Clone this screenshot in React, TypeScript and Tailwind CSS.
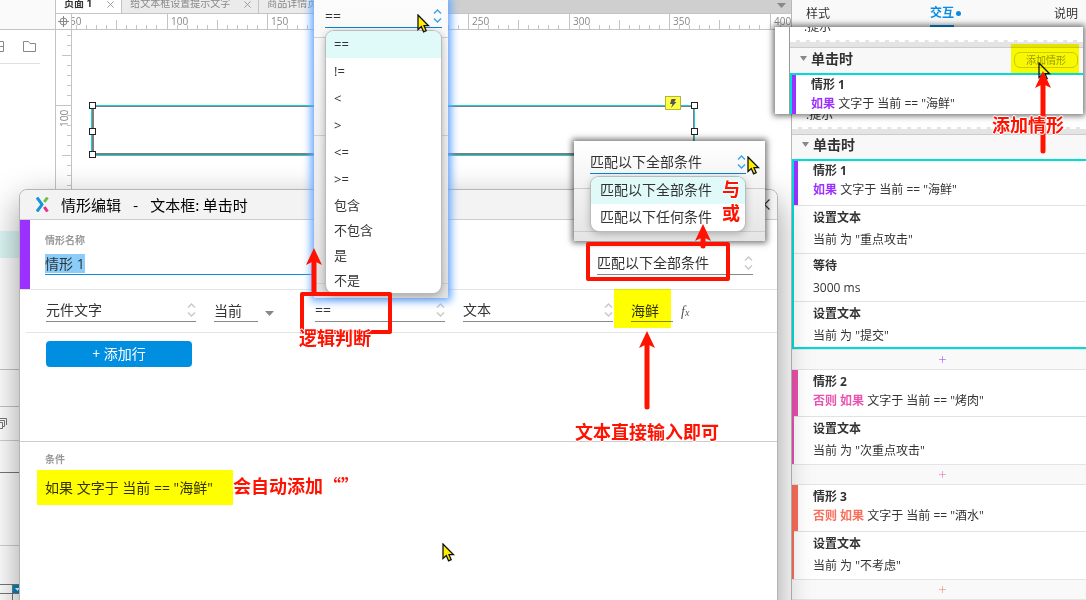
import React from 'react';

const operators = ['==', '!=', '<', '>', '<=', '>='];
const textOperators = ['包含', '不包含', '是', '不是'];

interface ActionData {
  title: string;
  detail: string;
}

interface CaseData {
  name: string;
  prefix: string;
  condition: string;
  bar: string;
  line: string;
  text: string;
  selected?: boolean;
  actions: ActionData[];
}

const cases: CaseData[] = [
  {
    name: '情形 1',
    prefix: '如果',
    condition: '文字于 当前 == "海鲜"',
    bar: 'bg-[#9b30ff]',
    line: 'border-[#9b30ff]',
    text: 'text-[#9b30ff]',
    selected: true,
    actions: [
      { title: '设置文本', detail: '当前 为 "重点攻击"' },
      { title: '等待', detail: '3000 ms' },
      { title: '设置文本', detail: '当前 为 "提交"' },
    ],
  },
  {
    name: '情形 2',
    prefix: '否则 如果',
    condition: '文字于 当前 == "烤肉"',
    bar: 'bg-[#e650ac]',
    line: 'border-[#e650ac]',
    text: 'text-[#e854b0]',
    actions: [{ title: '设置文本', detail: '当前 为 "次重点攻击"' }],
  },
  {
    name: '情形 3',
    prefix: '否则 如果',
    condition: '文字于 当前 == "酒水"',
    bar: 'bg-[#fa6c5a]',
    line: 'border-[#fa6c5a]',
    text: 'text-[#fa6f5c]',
    actions: [{ title: '设置文本', detail: '当前 为 "不考虑"' }],
  },
];

const Chevrons = ({ className = 'text-[#c8c8c8]' }: { className?: string }) => (
  <svg width="9" height="14" viewBox="0 0 9 14" fill="none" stroke="currentColor" strokeWidth="1.4" className={`shrink-0 ${className}`}>
    <path d="M1 4.5L4.5 1L8 4.5M1 9.5L4.5 13L8 9.5" />
  </svg>
);

const Triangle = ({ className = '' }: { className?: string }) => (
  <svg width="9" height="5" viewBox="0 0 9 5" className={`shrink-0 ${className}`}>
    <path d="M0 0H9L4.5 5Z" fill="#888" />
  </svg>
);

interface SelectProps {
  label: string;
  options: string[];
  width: string;
  active?: boolean;
}

const Select: React.FC<SelectProps> = ({ label, options, width, active }) => (
  <div className={`flex h-6 items-center border-b ${active ? 'border-[#0a84d0]' : 'border-[#888]'} ${width}`}>
    <select aria-label={label} className="min-w-0 flex-1 appearance-none bg-transparent text-sm leading-5 outline-none">
      {options.map((o) => (
        <option key={o}>{o}</option>
      ))}
    </select>
    <Chevrons className={active ? 'text-[#35a3ea]' : 'text-[#c8c8c8]'} />
  </div>
);

const Cursor = ({ className, fill = '#ffee00' }: { className: string; fill?: string }) => (
  <svg width="13" height="19" viewBox="0 0 13 19" className={`absolute ${className}`}>
    <path d="M1 1V15.5L4.3 12.5L6.6 17.8L9.2 16.7L7 11.7H11.6Z" fill={fill} stroke="#111" strokeWidth="1.3" />
  </svg>
);

const Arrow = ({ className, length }: { className: string; length: number }) => (
  <svg width="16" height={length} className={`absolute ${className}`}>
    <path d={`M8 12V${length - 3}`} stroke="#ff1200" strokeWidth="5" strokeLinecap="round" />
    <path d="M8 0L16 17L8 13L0 17Z" fill="#ff1200" />
  </svg>
);

const Note = ({ className, children }: { className: string; children: React.ReactNode }) => (
  <p
    className={`absolute whitespace-nowrap font-['Noto_Sans_CJK_SC',sans-serif] text-lg leading-5 font-bold text-[#ff1200] [text-shadow:-1px_0_#fff,1px_0_#fff,0_-1px_#fff,0_1px_#fff,0_0_2px_#fff] ${className}`}
  >
    {children}
  </p>
);

const CloseX = ({ size = 7, stroke = '#888' }: { size?: number; stroke?: string }) => (
  <svg width={size} height={size} viewBox="0 0 10 10" stroke={stroke} strokeWidth="1.1" className="shrink-0">
    <path d="M0.5 0.5L9.5 9.5M9.5 0.5L0.5 9.5" />
  </svg>
);

const HorizontalRuler = () => {
  const ticks = Array.from({ length: 72 }, (_, i) => i);
  return (
    <svg className="h-full min-w-0 flex-1" aria-hidden="true">
      {ticks.map((i) => {
        const x = Math.round(i * 10.05 - 6);
        const y = i % 10 === 0 ? 0 : i % 5 === 0 ? 6 : 11;
        return <path key={i} d={`M${x + 0.5} ${y}V16`} stroke="#c4c4c4" />;
      })}
      {[50, 100, 150, 200, 250, 300, 350, 400].map((n, i) => (
        <text key={n} x={Math.round(i * 100.5 - 2)} y="11" fontSize="10" fill="#888">
          {n}
        </text>
      ))}
    </svg>
  );
};

const VerticalRuler = () => (
  <svg className="h-full w-4 shrink-0" aria-hidden="true">
    {Array.from({ length: 57 }, (_, i) => i).map((i) => {
      const x = i % 10 === 7 ? 0 : i % 5 === 2 ? 6 : 11;
      return <path key={i} d={`M${x} ${i * 10 + 5.5}H16`} stroke="#c4c4c4" />;
    })}
    <text transform="translate(12 97) rotate(-90)" fontSize="10" fill="#888">
      100
    </text>
  </svg>
);

const LeftPanel = () => (
  <aside className="flex w-14 shrink-0 flex-col border-r border-[#c4c4c4] bg-white">
    <div className="h-[30px] shrink-0 border-b border-[#c4c4c4] bg-[#fafafa]" />
    <div className="mr-[15px] flex h-[34px] shrink-0 items-center gap-[18px] border-b border-[#e0e0e0]">
      <svg width="5" height="12" fill="none" stroke="#888">
        <path d="M0 0.5H3.5V10.5H0M0 5.5H3" />
      </svg>
      <svg width="14" height="12" fill="none" stroke="#888">
        <path d="M0.5 10.5V0.5H5.5L7 2.5H12.5V10.5Z" />
      </svg>
    </div>
    <div className="h-[167px] shrink-0" />
    <div className="h-[27px] shrink-0 bg-[#dcf8f6]" />
    <div className="h-[112px] shrink-0 border-b border-[#c4c4c4]" />
    <div className="h-[37px] shrink-0 border-b border-[#c4c4c4]" />
    <div className="flex h-[34px] shrink-0 items-center border-b border-[#d0d0d0]">
      <svg width="8" height="12" fill="none" stroke="#777">
        <path d="M0 0.5H6.5V7M0 2.5H4.5V8.5H3M0 4.5H2.5V10.5H0" />
      </svg>
    </div>
    <div className="h-8 shrink-0 border-b border-[#777]" />
    <div className="h-[73px] shrink-0 border-b border-[#d0d0d0]" />
    <div className="h-[39px] shrink-0 border-b border-[#777]" />
    <div className="flex flex-1">
      <div className="w-[13px] border-r border-[#777]">
        <div className="h-[9px] border-b border-[#777]" />
      </div>
      <div className="flex h-[9px] flex-1 items-center border-b border-[#777] bg-[#0089c5] pl-[2px]">
        <svg width="5" height="3">
          <path d="M0 0H5L2.5 3Z" fill="#fff" />
        </svg>
      </div>
    </div>
  </aside>
);

const Handle = ({ className }: { className: string }) => (
  <span className={`absolute size-[7px] border border-[#222] bg-white ${className}`} />
);

const Workspace = () => (
  <main className="flex min-w-0 flex-1 flex-col">
    <nav className="flex h-[14px] shrink-0 overflow-hidden border-b border-[#c4c4c4] bg-[#cfcfcf] text-[10px] leading-[10px] text-[#888]">
      <div className="flex shrink-0 items-end gap-[15px] border-r border-[#c4c4c4] bg-white pr-[7px] pb-[5px] pl-2 font-bold whitespace-nowrap text-[#333]">
        页面 1 <CloseX />
      </div>
      <div className="flex shrink-0 items-end gap-[14px] border-r border-[#c4c4c4] bg-[#ebebeb] pr-[7px] pb-[5px] pl-2 whitespace-nowrap">
        给文本框设置提示文字 <CloseX />
      </div>
      <div className="flex shrink-0 items-end gap-[14px] bg-[#ebebeb] pr-[7px] pb-[5px] pl-2 whitespace-nowrap">
        商品详情页 <CloseX />
      </div>
      <Triangle className="mt-[3px] mr-[5px] ml-auto" />
    </nav>
    <div className="flex h-4 shrink-0 border-b border-[#c4c4c4]">
      <div className="flex w-4 shrink-0 items-center justify-center border-r border-[#c4c4c4]">
        <svg width="11" height="11" fill="none" stroke="#888">
          <circle cx="5.5" cy="5.5" r="3.5" />
          <path d="M5.5 0V11M0 5.5H11" />
        </svg>
      </div>
      <HorizontalRuler />
    </div>
    <div className="flex min-h-0 flex-1">
      <div className="flex w-4 shrink-0 border-r border-[#c4c4c4]">
        <VerticalRuler />
      </div>
      <div className="relative flex-1 overflow-hidden">
        <div className="absolute top-[75px] left-[19px] h-[51px] w-[604px] border border-[#18d0d4]">
          <div className="size-full border-2 border-t border-r border-[#7d7d7d]" />
          <Handle className="-top-[4px] -left-[3px]" />
          <Handle className="top-[22px] -left-[3px]" />
          <Handle className="-bottom-[3px] -left-[3px]" />
          <Handle className="-top-[4px] -right-[4px]" />
          <Handle className="top-[22px] -right-[4px]" />
          <Handle className="-right-[4px] -bottom-[3px]" />
          <span className="absolute -top-[10px] right-[13px] flex h-[14px] w-4 items-center justify-center border border-[#b5b53c] bg-[#ffff3f]">
            <svg width="8" height="9" viewBox="0 0 8 9">
              <path d="M2.5 0H7L5.3 3H7.5L2 9L3.4 5H1Z" fill="#555" />
            </svg>
          </span>
        </div>
      </div>
    </div>
  </main>
);

const CaseHeader = ({ data }: { data: CaseData }) => (
  <div className="flex h-[46px] bg-white">
    <div className={`w-[6px] shrink-0 ${data.bar}`} />
    <div className="pt-[2px] pl-[15px] leading-[19px] whitespace-nowrap">
      <h3 className="font-bold">{data.name}</h3>
      <p>
        <b className={data.text}>{data.prefix}</b> {data.condition}
      </p>
    </div>
  </div>
);

const CaseBlock = ({ data }: { data: CaseData }) => (
  <section className="relative">
    <CaseHeader data={data} />
    {data.actions.map((a, i) => (
      <div key={i} className={`h-12 border-l-2 bg-white ${data.line}`}>
        <div className="h-full border-t border-[#e2e2e2] pt-px pl-[19px] leading-[22px]">
          <h4 className="font-bold">{a.title}</h4>
          <p>{a.detail}</p>
        </div>
      </div>
    ))}
    {data.selected && <div className="pointer-events-none absolute inset-0 border-2 border-r-0 border-[#00dcd8]" />}
  </section>
);

const EventHeader = ({ children }: { children?: React.ReactNode }) => (
  <>
    <div className="h-[7px] border-t-2 border-dashed border-white bg-[#e4e4e4]" />
    <div className="flex h-[26px] items-center border-t border-[#ccc] bg-[#f8f8f8] pr-[5px] pb-1 pl-[10px]">
      <svg width="7" height="5">
        <path d="M0 0H7L3.5 5Z" fill="#888" />
      </svg>
      <h2 className="ml-1 flex-1 text-sm leading-5 font-bold">单击时</h2>
      {children}
    </div>
  </>
);

const RightPanel = () => (
  <aside className="flex w-[295px] shrink-0 flex-col border-l border-[#b8b8b8] bg-[#f9f9f9] text-xs">
    <nav className="flex h-[27px] shrink-0 justify-between pr-2 pl-[14px] leading-4">
      <button className="h-[27px]">样式</button>
      <button className="relative h-[27px] border-b-2 border-[#0a8ddf] font-bold text-[#0a8ddf]">
        交互
        <span className="absolute top-[11px] left-[26px] size-[5px] rounded-full bg-[#0a8ddf]" />
      </button>
      <button className="h-[27px]">说明</button>
    </nav>
    <div className="flex h-[100px] shrink-0 items-end bg-white pb-[6px] pl-[14px] leading-3">:提示</div>
    <EventHeader />
    {cases.map((c) => (
      <React.Fragment key={c.name}>
        <CaseBlock data={c} />
        <button aria-label="添加动作" className={`flex h-[21px] shrink-0 items-center justify-center border-y border-[#e4e4e4] pr-px pl-[6px] ${c.text}`}>
          <svg width="8" height="7" stroke="currentColor" strokeOpacity="0.5">
            <path d="M4.5 0V7M1 3.5H8" />
          </svg>
        </button>
      </React.Fragment>
    ))}
  </aside>
);

const CaseDialog = () => (
  <section
    role="dialog"
    aria-label="情形编辑"
    className="absolute top-[189px] right-[308px] -bottom-5 left-[19px] rounded-t-lg border border-[#b4b4b4] bg-white shadow-[0_12px_34px_rgba(0,0,0,0.4)]"
  >
    <header className="flex h-[30px] items-center rounded-t-lg border-b border-[#ccc] bg-[#f3f3f3] pr-[7px] pl-4 font-['Noto_Sans_CJK_SC',sans-serif] text-[15px] leading-5 text-black">
      <svg width="13" height="15" viewBox="0 0 13 15" fill="none" strokeWidth="3">
        <path d="M1 0.5L6 7.5L1 14.5" stroke="#1296db" />
        <path d="M11.5 0.5L8.3 5" stroke="#6cc04a" />
        <path d="M8.3 10L11.5 14.5" stroke="#f0288c" />
      </svg>
      <h1 className="ml-3 flex flex-1 gap-3">
        <span>情形编辑</span>
        <span>-</span>
        <span>文本框: 单击时</span>
      </h1>
      <button aria-label="关闭">
        <CloseX size={11} stroke="#333" />
      </button>
    </header>
    <div className="flex border-b border-[#e4e4e4]">
      <div className="w-[10px] shrink-0 bg-[#9b30ff]" />
      <div className="flex flex-1 items-end justify-between pt-[13px] pr-6 pb-[14px] pl-[15px]">
        <label className="w-[290px]">
          <span className="block text-[10px] leading-[14px] font-bold text-[#999]">情形名称</span>
          <span className="flex h-7 items-end border-b border-[#0a8ddf] pb-px">
            <input defaultValue="情形 1" className="h-[19px] w-[40px] bg-[#8acdfb] text-sm outline-none" />
          </span>
        </label>
        <Select label="匹配条件" options={['匹配以下全部条件', '匹配以下任何条件']} width="w-[156px]" />
      </div>
    </div>
    <div className="ml-[6px] flex h-[43px] items-start border-b border-[#e4e4e4] pt-2 pl-5">
      <Select label="条件类型" options={['元件文字']} width="w-[150px]" />
      <input aria-label="目标元件" defaultValue="当前" className="ml-[18px] h-6 w-[44px] border-b border-[#888] text-sm outline-none" />
      <button aria-label="选择元件" className="mt-[13px] ml-[7px] flex">
        <Triangle />
      </button>
      <div className="ml-[41px] flex items-start gap-[18px]">
        <Select label="逻辑判断" options={[...operators, ...textOperators]} width="w-[130px]" />
        <Select label="值类型" options={['文本']} width="w-[150px]" />
        <input aria-label="值" defaultValue="海鲜" className="h-6 w-[42px] border-b border-[#888] text-sm outline-none" />
      </div>
      <button aria-label="编辑值" className="ml-2 font-['Liberation_Serif',serif] text-sm leading-7 text-[#555] italic">
        f<span className="text-[10px]">x</span>
      </button>
    </div>
    <button className="mt-2 ml-[26px] block h-[26px] w-[146px] rounded-sm bg-[#008fe0] text-sm leading-5 text-white">+ 添加行</button>
    <div className="mt-[74px] border-t border-[#ccc] pt-[10px] pl-[25px]">
      <h2 className="text-[10px] leading-[14px] font-bold text-[#999]">条件</h2>
      <p className="mt-3 text-sm leading-5">如果 文字于 当前 == "海鲜"</p>
    </div>
  </section>
);

const OperatorPopup = () => (
  <div className="absolute top-0 left-[314px] h-[298px] w-[134px] bg-linear-to-b from-[#fcfcfc] to-[#e2e2e2] pt-1 pr-[6px] pl-[11px] shadow-[0_0_8px_3px_#62a4ff]">
    <Select label="运算符" options={operators} width="w-[117px]" active />
    <div className="-mr-[6px] -ml-[11px] mt-[9px] h-[247px] border-y border-[#d0d0d0]">
      <div className="h-[98px] border-b border-[#d0d0d0]" />
    </div>
    <ul
      role="listbox"
      aria-label="运算符列表"
      className="absolute top-[31px] left-3 w-[115px] overflow-hidden rounded-lg bg-white text-[13px] shadow-[0_0_0_1px_#bbb,0_2px_8px_rgba(0,0,0,0.35)]"
    >
      {operators.map((o, i) => (
        <li key={o} role="option" aria-selected={i === 0} className={`h-[27px] pl-2 leading-[26px] ${i === 0 ? 'bg-[#e0fafa]' : ''}`}>
          {o}
        </li>
      ))}
      {textOperators.map((o) => (
        <li key={o} role="option" aria-selected={false} className="h-[25px] pl-2 leading-6">
          {o}
        </li>
      ))}
    </ul>
  </div>
);

const MatchPopup = () => (
  <div className="absolute top-[141px] left-[574px] h-[100px] w-[191px] bg-linear-to-b from-white to-[#e4e4e4] pt-[9px] pl-4 shadow-[0_0_6px_2px_rgba(0,0,0,0.55)]">
    <Select label="匹配方式" options={['匹配以下全部条件', '匹配以下任何条件']} width="w-[156px]" active />
    <div className="-ml-4 mt-[14px] h-[44px] border-y border-[#ccc]" />
    <ul
      role="listbox"
      aria-label="匹配方式列表"
      className="absolute top-9 left-[17px] w-[154px] overflow-hidden rounded-lg bg-white text-sm shadow-[0_0_0_1px_#bbb,0_2px_8px_rgba(0,0,0,0.3)]"
    >
      <li role="option" aria-selected className="h-[27px] bg-[#e0fafa] pl-[9px] leading-[26px]">
        匹配以下全部条件
      </li>
      <li role="option" aria-selected={false} className="h-[27px] pl-[9px] leading-[26px]">
        匹配以下任何条件
      </li>
    </ul>
  </div>
);

const EventInset = () => (
  <div className="absolute top-[27px] right-[3px] flex h-[87px] w-[308px] overflow-hidden bg-white text-xs shadow-[0_0_6px_2px_rgba(0,0,0,0.55)]">
    <div className="w-[14px] shrink-0" />
    <div className="flex-1 border-l border-[#999]">
      <div className="flex h-[13px] items-end overflow-hidden pb-[7px] pl-[14px] leading-3">:提示</div>
      <EventHeader>
        <button className="mt-[2px] h-4 w-16 rounded-md border border-[#ccc] text-[10px] leading-[14px] text-[#999]">添加情形</button>
      </EventHeader>
      <div className="relative">
        <CaseHeader data={cases[0]} />
        <div className="pointer-events-none absolute inset-0 border-t-2 border-l-2 border-[#00dcd8]" />
      </div>
    </div>
  </div>
);

export default function App() {
  return (
    <div className="relative flex h-screen overflow-hidden bg-white font-['Open_Sans','Noto_Sans_CJK_SC',sans-serif] text-[#333]">
      <LeftPanel />
      <Workspace />
      <RightPanel />

      <CaseDialog />
      <OperatorPopup />
      <MatchPopup />
      <EventInset />

      {/* highlighter marks */}
      <div className="pointer-events-none absolute top-[44px] right-[7px] h-[29px] w-[68px] bg-[#ffff00] mix-blend-multiply" />
      <div className="pointer-events-none absolute top-[289px] left-[614px] h-[39px] w-[57px] bg-[#ffff00] mix-blend-multiply" />
      <div className="pointer-events-none absolute top-[470px] left-[37px] h-[35px] w-[196px] bg-[#ffff00] mix-blend-multiply" />

      {/* red boxes, arrows and notes */}
      <div className="pointer-events-none absolute top-[292px] left-[300px] h-[42px] w-[92px] rounded-xs border-4 border-[#ff1200]" />
      <div className="pointer-events-none absolute top-[242px] left-[586px] h-[39px] w-[144px] rounded-xs border-4 border-[#ff1200]" />
      <Cursor className="top-[62px] right-[35px]" fill="none" />
      <Arrow className="top-[248px] left-[306px]" length={46} />
      <Arrow className="top-[224px] left-[695px]" length={25} />
      <Arrow className="top-[331px] left-[639px]" length={79} />
      <Arrow className="top-[71px] right-[35px]" length={83} />
      <Note className="top-[114px] right-[22px]">添加情形</Note>
      <Note className="top-[327px] left-[299px]">逻辑判断</Note>
      <Note className="top-[421px] left-[575px]">文本直接输入即可</Note>
      <Note className="top-[475px] left-[233px]">会自动添加“”</Note>
      <Note className="top-[178px] left-[722px]">与</Note>
      <Note className="top-[202px] left-[722px]">或</Note>
      <Cursor className="top-[14px] left-[417px]" />
      <Cursor className="top-[156px] left-[747px]" />
      <Cursor className="top-[543px] left-[442px]" />
    </div>
  );
}
